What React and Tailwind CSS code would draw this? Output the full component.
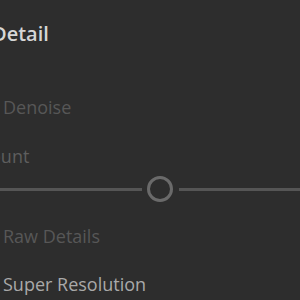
export default function App() {
  return (
    <div
      className="w-[300px] h-[300px] overflow-hidden bg-[#2d2d2d] flex flex-col"
      style={{ fontFamily: '"Open Sans", "Noto Sans", sans-serif' }}
    >
      <div className="h-[68px] shrink-0 pt-[21px] -ml-[8px] text-[20px] leading-[26px] font-semibold text-[#d6d6d6]">
        Detail
      </div>
      <div className="h-[50px] shrink-0 pt-[28px] pl-[3px] text-[18px] leading-[22px] text-[#575757]">
        Denoise
      </div>
      <div className="h-[49px] shrink-0 pt-[27px] -ml-[38px] text-[18px] leading-[22px] text-[#5e5e5e]">
        Amount
      </div>
      <div className="h-[44px] shrink-0 flex items-center">
        <div className="w-[142px] h-[3px] bg-[#555555]" />
        <div className="w-[26px] h-[26px] ml-[5px] rounded-full border-[3px] border-[#6a6a6a] shrink-0" />
        <div className="flex-1 ml-[6px] h-[3px] bg-[#555555]" />
      </div>
      <div className="h-[36px] shrink-0 pt-[14px] pl-[3px] text-[18px] leading-[22px] text-[#575757]">
        Raw Details
      </div>
      <div className="pt-[26px] pl-[3px] text-[18px] leading-[22px] text-[#a9a9a9]">
        Super Resolution
      </div>
    </div>
  );
}
